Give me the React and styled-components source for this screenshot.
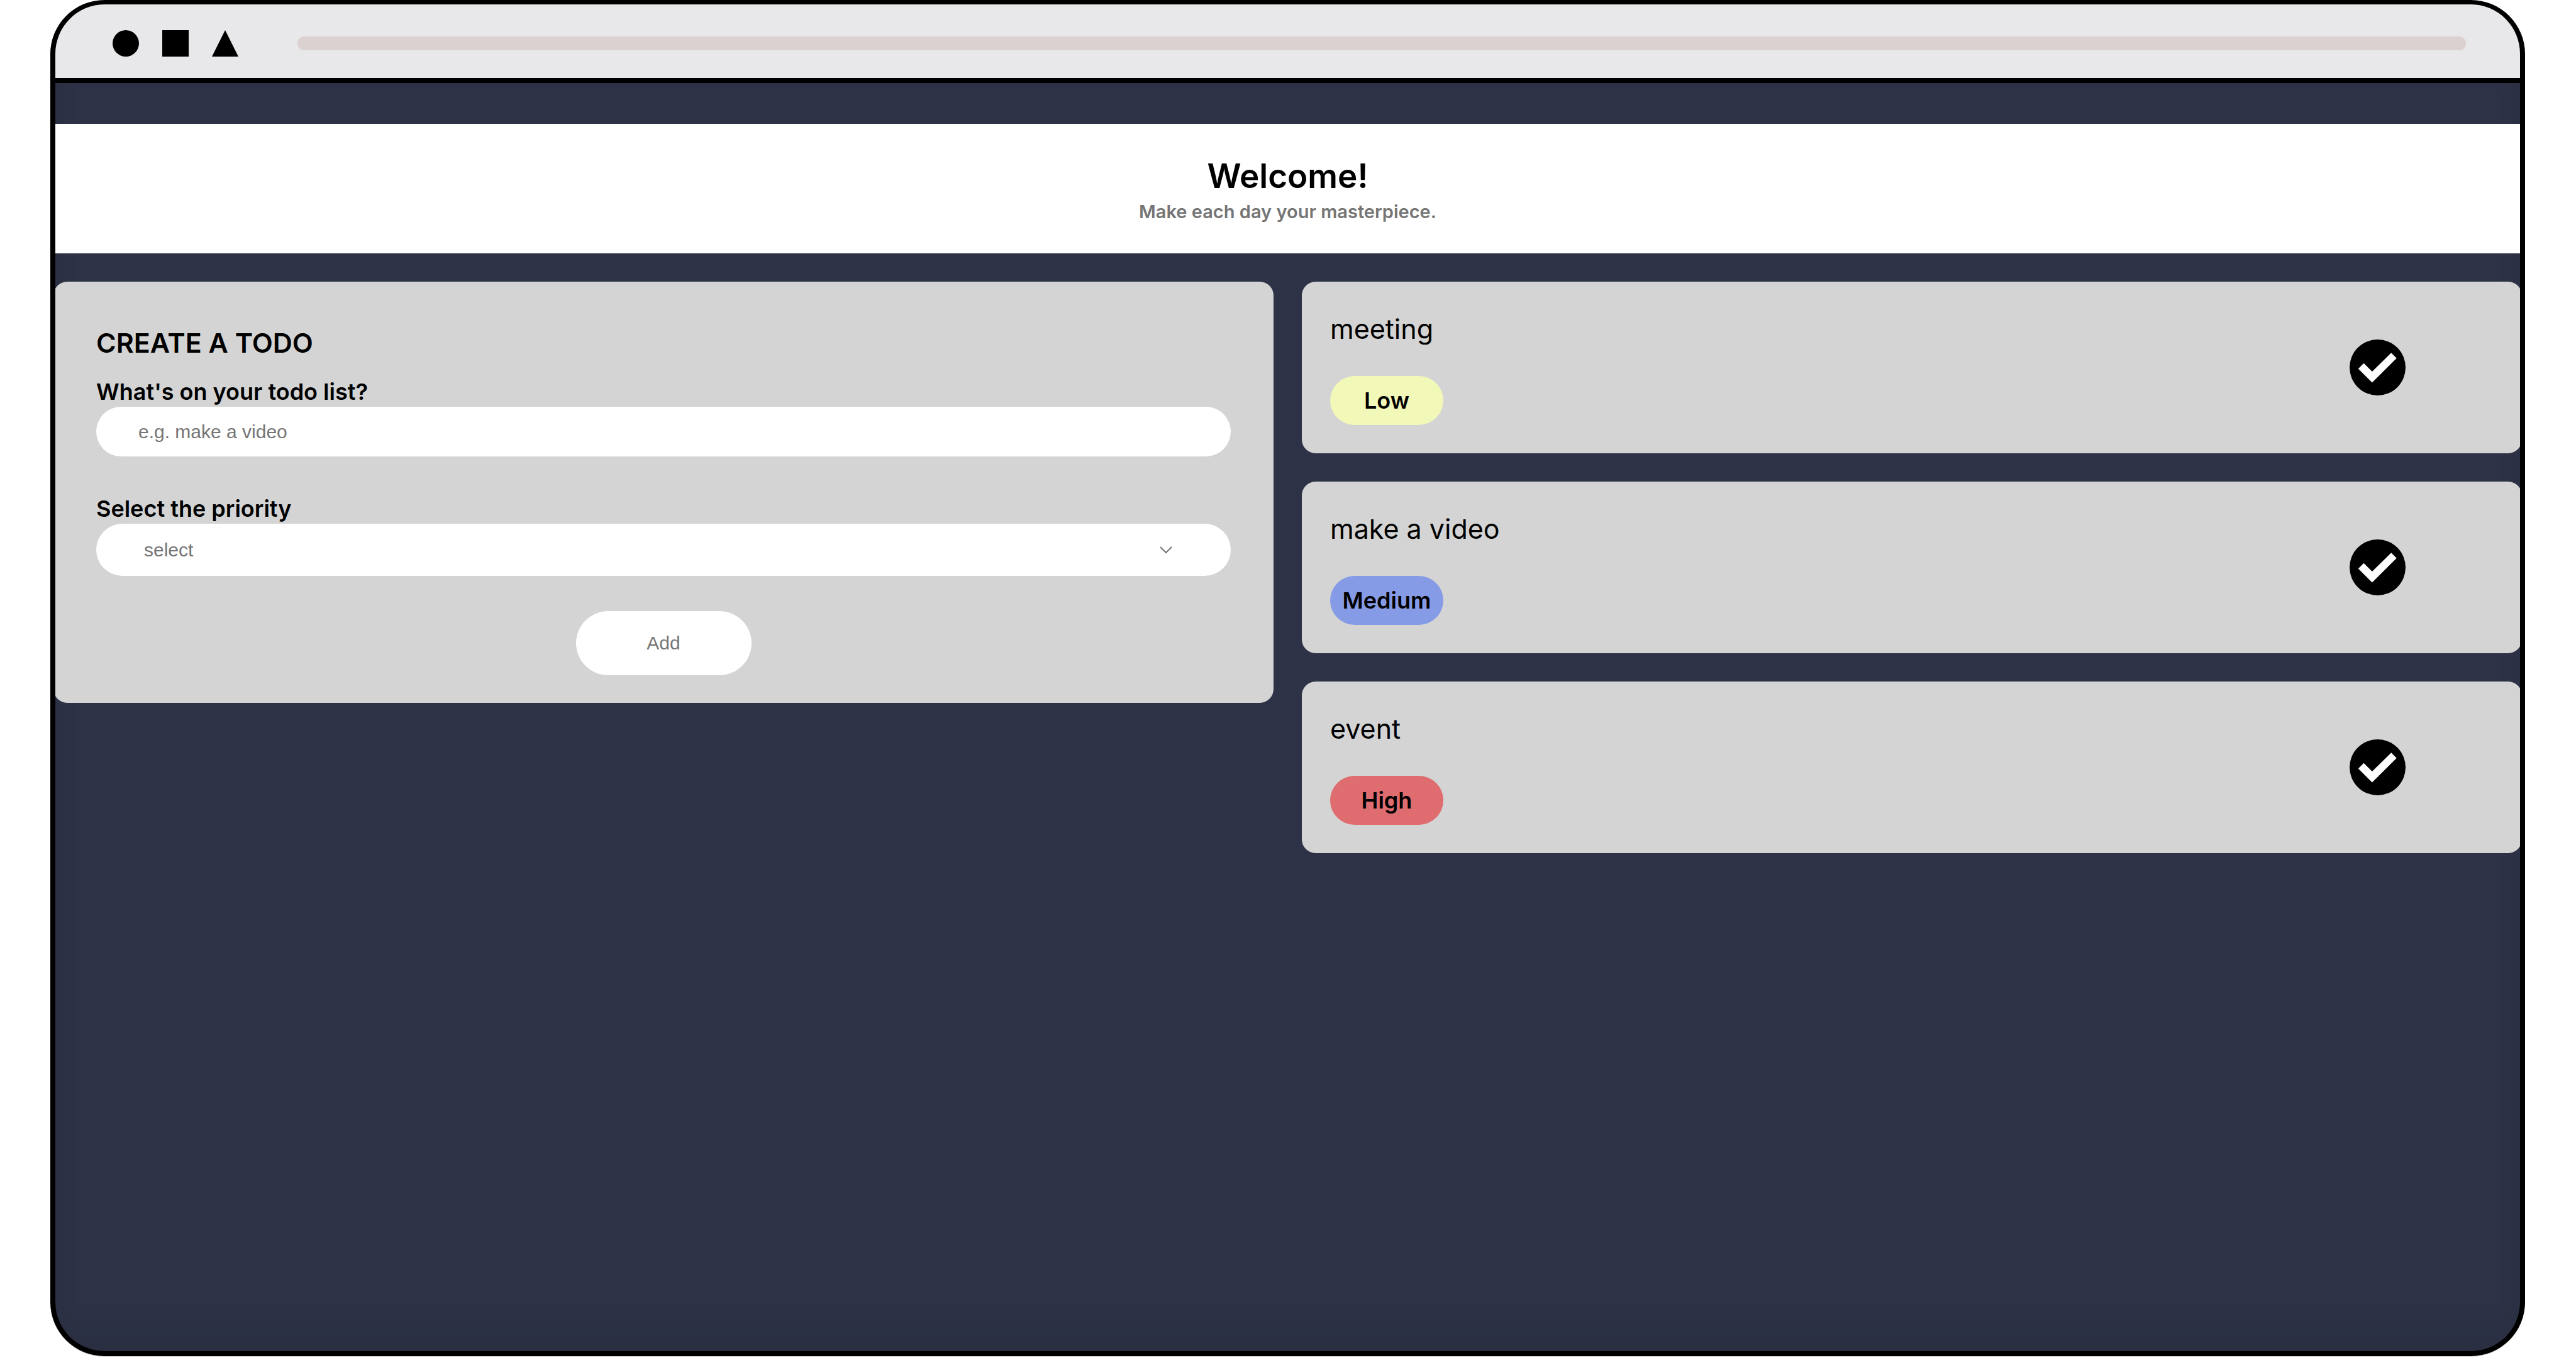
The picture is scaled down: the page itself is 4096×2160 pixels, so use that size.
import React, { useState } from 'react';
import styled, { createGlobalStyle } from 'styled-components';

const GlobalStyle = createGlobalStyle`
  *, *::before, *::after {
    box-sizing: border-box;
  }
  body {
    margin: 0;
    background: #fff;
    color: #000;
    font-family: Inter, "Liberation Sans", Arial, sans-serif;
  }
`;

const Frame = styled.div`
  display: flex;
  flex-direction: column;
  min-height: calc(100vh - 3px);
  margin: 0 81px 3px 80px;
  border: 8px solid #000;
  border-top-width: 7px;
  border-radius: 86px;
  overflow: hidden;
  background: #2d3246;
  box-shadow: 0 1px 0 #d2cccc;
`;

const TitleBar = styled.div`
  display: flex;
  align-items: center;
  gap: 94px;
  padding: 41px 86px 34px 91px;
  border-bottom: 8px solid #000;
  background: #e8e7e9;
`;

const Shapes = styled.svg`
  flex: none;
  width: 200px;
  height: 42px;
`;

const AddressLine = styled.div`
  flex: 1;
  height: 22px;
  border-radius: 11px;
  background: #dbd1d0;
`;

const Screen = styled.main`
  flex: 1;
  padding-top: 65px;
  box-shadow: inset 0 -30px 60px -30px rgba(20, 28, 36, 0.3);
`;

const Banner = styled.header`
  padding: 53px 45px 39px;
  background: #fff;
  text-align: center;
`;

const Heading = styled.h1`
  margin: 0;
  font-size: 53px;
  line-height: 60px;
  font-weight: 600;
`;

const Tagline = styled.p`
  margin: 0;
  font-size: 29px;
  line-height: 54px;
  font-weight: 600;
  color: #757575;
`;

const Columns = styled.div`
  display: grid;
  grid-template-columns: 1fr 1fr;
  align-items: start;
  gap: 45px;
  margin: 45px -3px;
`;

const Form = styled.form`
  display: flex;
  flex-direction: column;
  padding: 68px 68px 44px;
  border-radius: 22px;
  background: #d4d4d4;
`;

const FormTitle = styled.h2`
  margin: 0 0 25px;
  font-size: 43px;
  line-height: 58px;
  font-weight: 600;
`;

const Label = styled.label`
  font-size: 36px;
  line-height: 48px;
  font-weight: 600;
`;

const TextInput = styled.input`
  height: 79px;
  margin-bottom: 59px;
  padding: 0 67px;
  border: 0;
  border-radius: 40px;
  background: #fff;
  font-family: "Liberation Sans", Arial, sans-serif;
  font-size: 30px;
  color: #757575;

  &::placeholder {
    color: #757575;
  }
`;

const SelectBox = styled.div`
  display: grid;
  align-items: center;
  margin-bottom: 56px;
`;

const Select = styled.select`
  grid-area: 1 / 1;
  width: 100%;
  height: 83px;
  padding: 0 76px;
  border: 0;
  border-radius: 42px;
  appearance: none;
  background: #fff;
  font-family: "Liberation Sans", Arial, sans-serif;
  font-size: 30px;
  color: #757575;
`;

const Chevron = styled.svg`
  grid-area: 1 / 1;
  justify-self: end;
  width: 22px;
  height: 13px;
  margin-right: 92px;
  pointer-events: none;
`;

const AddButton = styled.button`
  align-self: center;
  width: 279px;
  height: 102px;
  border: 0;
  border-radius: 51px;
  background: #fff;
  font-family: "Liberation Sans", Arial, sans-serif;
  font-size: 30px;
  color: #757575;
  cursor: pointer;
`;

const List = styled.ul`
  display: grid;
  gap: 45px;
  margin: 0;
  padding: 0;
  list-style: none;
`;

const Item = styled.li`
  display: flex;
  align-items: center;
  justify-content: space-between;
  padding: 45px 185px 45px 45px;
  border-radius: 22px;
  background: #d4d4d4;
`;

const ItemTitle = styled.h3`
  margin: 0 0 45px;
  font-size: 43px;
  line-height: 60px;
  font-weight: 400;
`;

const Badge = styled.span`
  display: flex;
  align-items: center;
  justify-content: center;
  width: 180px;
  height: 78px;
  border-radius: 39px;
  background: ${({ $color }) => $color};
  font-size: 36px;
  font-weight: 600;
`;

const DoneButton = styled.button`
  display: flex;
  padding: 0;
  border: 0;
  background: none;
  cursor: pointer;
`;

const CheckIcon = styled.svg`
  width: 89px;
  height: 89px;
`;

const COLORS = {
  Low: '#f2f8b8',
  Medium: '#869be6',
  High: '#df6c6e',
};

const INITIAL = [
  { id: 1, text: 'meeting', priority: 'Low' },
  { id: 2, text: 'make a video', priority: 'Medium' },
  { id: 3, text: 'event', priority: 'High' },
];

export default function App() {
  const [todos, setTodos] = useState(INITIAL);
  const [text, setText] = useState('');
  const [priority, setPriority] = useState('');

  const add = (event) => {
    event.preventDefault();
    if (!text || !priority) return;
    setTodos([...todos, { id: Date.now(), text, priority }]);
    setText('');
    setPriority('');
  };

  return (
    <>
      <GlobalStyle />
      <Frame>
        <TitleBar>
          <Shapes viewBox="0 0 200 42" aria-hidden="true">
            <circle cx="21" cy="21" r="21" />
            <rect x="79" width="42" height="42" />
            <path d="M179 0l21 42h-42z" />
          </Shapes>
          <AddressLine />
        </TitleBar>
        <Screen>
          <Banner>
            <Heading>Welcome!</Heading>
            <Tagline>Make each day your masterpiece.</Tagline>
          </Banner>
          <Columns>
            <Form onSubmit={add}>
              <FormTitle>CREATE A TODO</FormTitle>
              <Label htmlFor="todo">What's on your todo list?</Label>
              <TextInput
                id="todo"
                type="text"
                placeholder="e.g. make a video"
                value={text}
                onChange={(e) => setText(e.target.value)}
              />
              <Label htmlFor="priority">Select the priority</Label>
              <SelectBox>
                <Select
                  id="priority"
                  value={priority}
                  onChange={(e) => setPriority(e.target.value)}
                >
                  <option value="">select</option>
                  <option>Low</option>
                  <option>Medium</option>
                  <option>High</option>
                </Select>
                <Chevron viewBox="0 0 22 13" aria-hidden="true">
                  <path d="M2 2l9 9 9-9" fill="none" stroke="#757575" strokeWidth="2" />
                </Chevron>
              </SelectBox>
              <AddButton type="submit">Add</AddButton>
            </Form>
            <List>
              {todos.map((todo) => (
                <Item key={todo.id}>
                  <div>
                    <ItemTitle>{todo.text}</ItemTitle>
                    <Badge $color={COLORS[todo.priority]}>{todo.priority}</Badge>
                  </div>
                  <DoneButton
                    type="button"
                    aria-label={`Complete ${todo.text}`}
                    onClick={() => setTodos(todos.filter((t) => t.id !== todo.id))}
                  >
                    <CheckIcon viewBox="2 2 20 20" aria-hidden="true">
                      <circle cx="12" cy="12" r="10" />
                      <path
                        d="M5.1 12.45L7.06 10.5L10.06 13.45L16.87 6.75L18.8 8.7L10.06 17.4Z"
                        fill="#fff"
                      />
                    </CheckIcon>
                  </DoneButton>
                </Item>
              ))}
            </List>
          </Columns>
        </Screen>
      </Frame>
    </>
  );
}
